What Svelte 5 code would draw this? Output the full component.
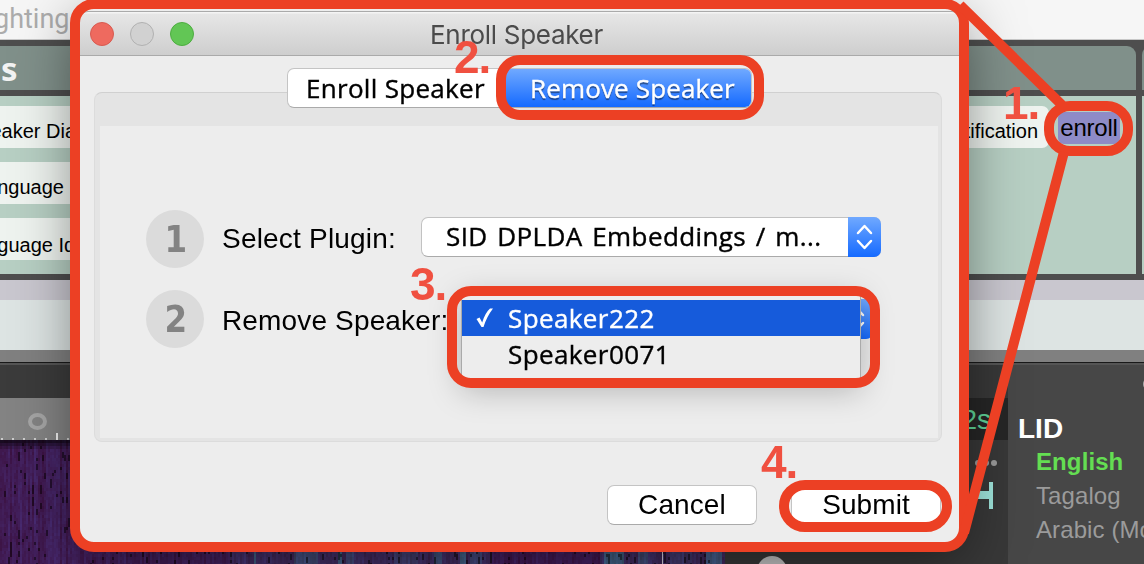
<script>
  import { onMount } from 'svelte';

  let spectrum;
  const leftChips = ['Speaker Diarization', 'Language ID', 'Language Identification'];
  const languages = ['English', 'Tagalog', 'Arabic (Modern)'];
  const options = ['Speaker222', 'Speaker0071'];
  const ticks = Array.from({ length: 7 }, (_, i) => i);

  onMount(() => {
    const ctx = spectrum.getContext('2d');
    let seed = 7;
    const rnd = () => (seed = (seed * 16807) % 2147483647) / 2147483647;
    const bands = [[254, 2, 1], [305, 12, 0.7], [339, 2, 1], [349, 4, 0.6], [405, 12, 0.5], [437, 5, 0.8], [462, 3, 1], [475, 6, 0.6], [613, 10, 1], [642, 5, 0.7], [680, 12, 0.4], [713, 9, 0.9]];
    for (let x = 0; x < 725; x += 2) {
      const streak = rnd();
      let blue = x < 230 ? 0.05 : x > 490 && x < 600 ? 0 : 0.25;
      for (const [c, w, k] of bands) if (Math.abs(x - c) < w) blue = k;
      let v = 0.5;
      for (let y = 0; y < 124; y += 3) {
        v = v * 0.6 + rnd() * 0.4;
        const b = Math.max(0, Math.min(1, v * 0.9 + streak * 0.5 - 0.2));
        const dark = v < 0.28 ? 0.55 : 1;
        const top = Math.min(1, 0.4 + y / 14);
        const r = (60 + 12 * b) * dark * top;
        const g = (14 + 26 * b + blue * 70) * dark * top;
        const bl = (62 + 50 * b + blue * 48) * dark * top;
        ctx.fillStyle = `rgb(${r | 0},${g | 0},${bl | 0})`;
        ctx.fillRect(x, y, 2, 3);
      }
    }
    ctx.fillStyle = '#d8d3dc';
    ctx.fillRect(662, 0, 1, 124);
  });
</script>

<div class="screen">
  <div class="toolbar"><span>ghting</span></div>
  <div class="columns">
    <section class="column wide">
      <header>s</header>
      <div class="body">
        <div class="chips">
          {#each leftChips as c}<div class="chip"><span>{c}</span></div>{/each}
        </div>
        <div class="right-chips">
          <div class="chip ident">Identification</div>
          <div class="chip enroll">enroll</div>
        </div>
      </div>
    </section>
    <section class="column next"><header></header><div class="body"></div></section>
  </div>
  <div class="lilac"></div>
  <div class="pale"></div>
  <div class="grey"></div>
  <div class="lower">
    <div class="wave">
      <div class="ruler">
        <i></i>
        <div class="ticks">{#each ticks as t}<b class:tall={t === 5}></b>{/each}</div>
      </div>
      <canvas bind:this={spectrum} width="725" height="124"></canvas>
    </div>
    <div class="track">
      <div class="time">2s</div>
      <div class="dots"><i></i><i></i><i></i></div>
      <div class="handle"></div>
      <div class="knob"></div>
    </div>
    <aside>
      <em></em>
      <h2>LID</h2>
      {#each languages as l, i}<p class:hit={i === 0}>{l}</p>{/each}
    </aside>
  </div>

  <div class="dialog">
    <div class="titlebar">
      <div class="lights"><i class="r"></i><i class="n"></i><i class="g"></i></div>
      <span>Enroll Speaker</span>
    </div>
    <div class="tabs">
      <div class="tab"><span>Enroll Speaker</span></div>
      <div class="tab on"><span>Remove Speaker</span></div>
    </div>
    <div class="panel">
      <div class="inner">
        <div class="row">
          <div class="num"><span>1</span></div>
          <label>Select Plugin:</label>
          <div class="select">
            <span>SID DPLDA Embeddings / m...</span>
            <div class="arrows">
              <svg width="33" height="40" viewBox="0 0 33 40"><path d="M10 16l6.500-7 6.500 7M10 24l6.500 7 6.500-7" /></svg>
            </div>
          </div>
        </div>
        <div class="row second">
          <div class="num"><span>2</span></div>
          <label>Remove Speaker:</label>
        </div>
      </div>
    </div>
    <div class="buttons">
      <div class="btn">Cancel</div>
      <div class="btn">Submit</div>
    </div>
  </div>

  <div class="under">
    <svg width="33" height="40" viewBox="0 0 33 40"><path d="M10 16l6.500-7 6.500 7M10 24l6.500 7 6.500-7" /></svg>
  </div>
  <div class="menu">
    {#each options as o, i}
      <div class="option" class:sel={i === 0}>
        <svg width="18" height="22" viewBox="0 0 18 22">
          {#if i === 0}<path d="M1.500 12L4.500 10.500L7.200 15.500Q10 6 15 1.500L18 1.500Q11.500 10 8.500 20L6.500 20Z" />{/if}
        </svg>
        <span>{o}</span>
      </div>
    {/each}
  </div>

  <svg class="marks" width="1144" height="564" viewBox="0 0 1144 564">
    <g fill="none" stroke="#ec4024" stroke-width="10">
      <rect x="75" y="4" width="889" height="543" rx="19" />
      <rect x="501" y="60" width="258" height="55" rx="19" />
      <rect x="452" y="291" width="423" height="92" rx="19" />
      <rect x="784" y="485" width="163" height="42" rx="21" />
      <rect x="1049" y="106" width="79" height="45" rx="21" />
      <path d="M960 5L1062 105M1064 152L964 533" />
    </g>
    <g class="nums">
      <text x="1003" y="118.500">1.</text>
      <text x="454" y="72.500">2.</text>
      <text x="410" y="299.500">3.</text>
      <text x="761" y="477.500">4.</text>
    </g>
  </svg>
</div>

<style>
  :global(body) { background: #444; }
  * { box-sizing: border-box; }
  .screen { position: relative; width: 1144px; height: 564px; overflow: hidden; display: flex; flex-direction: column; font-family: "Liberation Sans", Arial, sans-serif; color: #000; white-space: nowrap; }
  .toolbar { flex: 0 0 40px; background: #f6f6f6; border-bottom: 1px solid #c8c8c8; color: #acacac; font: 27px/38px Roboto, sans-serif; }
  .toolbar span { margin-left: -6px; }
  .columns { flex: 0 0 240px; display: flex; gap: 6px; background: #4e4e4e; padding: 6px 0; }
  .column { display: flex; flex-direction: column; gap: 6px; }
  .wide { flex: 0 0 1136px; }
  .next { flex: 0 0 20px; }
  header { height: 44px; background: #80908a; border-radius: 0 9px 0 0; color: #f3f3f3; font: bold 33px/46px "Noto Sans", sans-serif; padding-left: 1px; }
  .next header { border-radius: 9px 0 0; }
  .body { flex: 1; background: #b7cfc3; display: flex; justify-content: space-between; padding-top: 10px; }
  .chips { display: flex; flex-direction: column; gap: 14px; }
  .chip { height: 42px; background: #eef3ef; font-size: 20px; line-height: 51px; }
  .chips .chip { width: 200px; overflow: hidden; display: flex; }
  .chips span { margin-left: -34px; }
  .chips .chip:nth-child(2) span { margin-left: -25px; }
  .chips .chip:nth-child(3) span { margin-left: -36px; padding-top: 2px; }
  .right-chips { display: flex; padding-right: 16px; gap: 9px; }
  .ident { border-radius: 7px; padding: 0 11px 0 50px; }
  .enroll { height: 32px; margin-top: 6px; width: 62px; background: #8e8bc7; border-radius: 6px; font-size: 24px; line-height: 32px; text-align: center; letter-spacing: -.2px; }
  .lilac { flex: 0 0 20px; background: #c9c7cf; }
  .pale { flex: 0 0 50px; background: #dde4e3; }
  .grey { flex: 0 0 12px; background: #808080; }
  .lower { flex: 1; display: flex; background: #3b3b3b; border-top: 1px solid #191919; box-shadow: inset 0 2px #555; }
  .wave { width: 725px; padding-top: 35px; display: flex; flex-direction: column; }
  .ruler { height: 42px; flex: none; background: #838383; display: flex; flex-direction: column; justify-content: space-between; align-items: flex-start; padding-top: 15px; }
  .ruler i { flex: none; width: 19px; height: 17px; border: 4.500px solid #a5a5a5; border-radius: 50%; margin-left: 28px; }
  .ticks { display: flex; align-items: flex-end; gap: 9px; padding-left: 1px; height: 8px; }
  .ticks b { width: 2px; height: 2px; background: #ccc; }
  .ticks b.tall { height: 7px; background: #eee; }
  canvas { display: block; flex: none; }
  .track { width: 283px; background: #383838; padding-top: 35px; display: flex; flex-direction: column; align-items: flex-end; box-shadow: inset 0 2px #555; }
  .time { width: 100%; height: 42px; flex: none; background: #262626; color: #60d79a; font-size: 28px; line-height: 43px; text-align: right; padding-right: 17px; }
  .dots { display: flex; gap: 2px; margin: 20px 11px 0 0; }
  .dots i { width: 6px; height: 6px; border-radius: 50%; background: #999; }
  .handle { width: 22px; height: 27px; flex: none; margin: 16px 15px 0 0; border-right: 4px solid #9fe5dc; background: linear-gradient(#9fe5dc, #9fe5dc) 0 9px / 22px 8px no-repeat; }
  .knob { flex: none; width: 30px; height: 30px; border-radius: 50%; background: #c4c4c4; align-self: flex-start; margin: 47px 0 0 32px; }
  aside { flex: 1; background: #474747; padding: 0 0 0 28px; color: #9b9b9b; box-shadow: inset 0 2px #555; overflow: hidden; }
  em { display: block; width: 10px; height: 12px; border: 2px solid #aaa; border-radius: 50%; margin: 15px 0 0 107px; }
  h2 { margin: 23px 0 0 -18px; font-size: 28px; line-height: 32px; color: #fff; }
  p { margin: 0; font-size: 24px; line-height: 34px; letter-spacing: .1px; }
  p.hit { color: #64de52; font-weight: bold; }

  .dialog { position: absolute; isolation: isolate; left: 78px; top: 7px; width: 884px; height: 537px; padding: 4px 2px 2px; background: #ededed; border-radius: 14px; box-shadow: 0 14px 60px rgba(0,0,0,.5); display: flex; flex-direction: column; }
  .titlebar { height: 45px; flex: none; border-top: 1px solid #aaa; border-bottom: 1px solid #aaa; background: linear-gradient(#f4f4f4 0 1px, #e6e6e6 2px, #cecece); display: grid; place-items: center; font: 26px/44px Inter, sans-serif; color: #4b4b4b; border-radius: 8px 8px 0 0; padding: 0 0 0 3px; }
  .titlebar > * { grid-area: 1 / 1; }
  .titlebar > span { letter-spacing: -.3px; margin: 2px 10px 0 0; line-height: 40px; }
  .lights { display: flex; gap: 16px; justify-self: start; margin: 0 0 0 7px; }
  .lights i { width: 24px; height: 24px; border-radius: 50%; border: 1px solid #d85a50; background: #ee6a5f; }
  .lights .n { background: #d1d1d1; border-color: #b1b1b1; }
  .lights .g { background: #62c655; border-color: #4dad40; }
  .tabs { display: flex; position: relative; z-index: 1; height: 40px; flex: none; margin: 12px 0 -16px 207px; width: 465px; font: 26px/40px "Open Sans", sans-serif; letter-spacing: .3px; border: 1px solid #c4c4c4; border-bottom-color: #aaa; border-radius: 7px; background: #fff; overflow: hidden; }
  .tab { flex: 0 0 218px; padding-left: 18px; line-height: 39px; -webkit-text-stroke: .4px; }
  .tab.on { flex: 1; padding-left: 24px; letter-spacing: .15px; color: #fff; background: linear-gradient(#70a9ff, #156aff); text-shadow: 0 2px 1px rgba(0,0,0,.45); }
  .panel { margin: 0 0 0 14px; width: 848px; height: 350px; flex: none; background: #e4e4e4; border: 1px solid #d8d8d8; border-color: #d0d0d0 #dcdcdc #dcdcdc; border-radius: 8px; padding: 33px 3px 3px 5px; }
  .inner { height: 100%; background: #ededed; padding: 84px 0 0 46px; }
  .row { display: flex; align-items: center; height: 58px; }
  .second { margin-top: 22px; }
  .num { width: 58px; height: 58px; border-radius: 50%; background: #dbdbdb; color: #838383; display: grid; place-items: center; font: bold 37px/50px "DejaVu Sans", "Noto Sans", sans-serif; padding: 1px 0 0 1px; }
  .num span { display: block; transform: scaleX(.88); }
  label { margin-left: 18px; font-size: 28px; width: 199px; letter-spacing: .2px; }
  .second label { padding-top: 4px; width: auto; letter-spacing: .15px; }
  .select { width: 460px; height: 40px; border: 1px solid #c2c2c2; border-bottom-color: #aaa; border-radius: 7px; background: #fff; font: 26px/36px "Open Sans", sans-serif; letter-spacing: .4px; word-spacing: 2.500px; -webkit-text-stroke: .4px; display: flex; justify-content: space-between; padding-left: 24px; margin-top: -4px; }
  .arrows, .under { width: 33px; height: 40px; margin: -1px -1px 0 0; background: linear-gradient(#70a9ff, #156aff); border-radius: 0 7px 7px 0; }
  .arrows path, .under path { fill: none; stroke: #fff; stroke-width: 2.500; stroke-linecap: round; stroke-linejoin: round; }
  .arrows svg, .under svg { display: block; }
  .buttons { display: flex; justify-content: flex-end; gap: 34px; margin: 43px 19px 0 0; }
  .btn { width: 150px; height: 40px; border: 1px solid #c4c4c4; border-bottom-color: #aaa; border-radius: 7px; background: #fff; font-size: 28px; line-height: 38px; text-align: center; letter-spacing: .1px; }
  .under { position: absolute; left: 840px; top: 300px; }
  .menu { position: absolute; left: 461px; top: 288px; width: 400px; height: 92px; background: #ededed; border: 1px solid #aaa; border-width: 0 1px; padding-top: 12px; box-shadow: 0 10px 32px rgba(0,0,0,.25); font: 26px/36px "Open Sans", sans-serif; letter-spacing: .4px; -webkit-text-stroke: .4px; }
  .option { height: 36px; display: flex; align-items: center; padding-left: 13px; gap: 15px; }
  .sel { background: #165bdb; color: #fff; }
  .option path { fill: #fff; }
  .marks { position: absolute; z-index: 5; inset: 0; }
  .nums { font: bold 46px "Liberation Sans", sans-serif; letter-spacing: -1px; fill: #f05040; }
</style>
